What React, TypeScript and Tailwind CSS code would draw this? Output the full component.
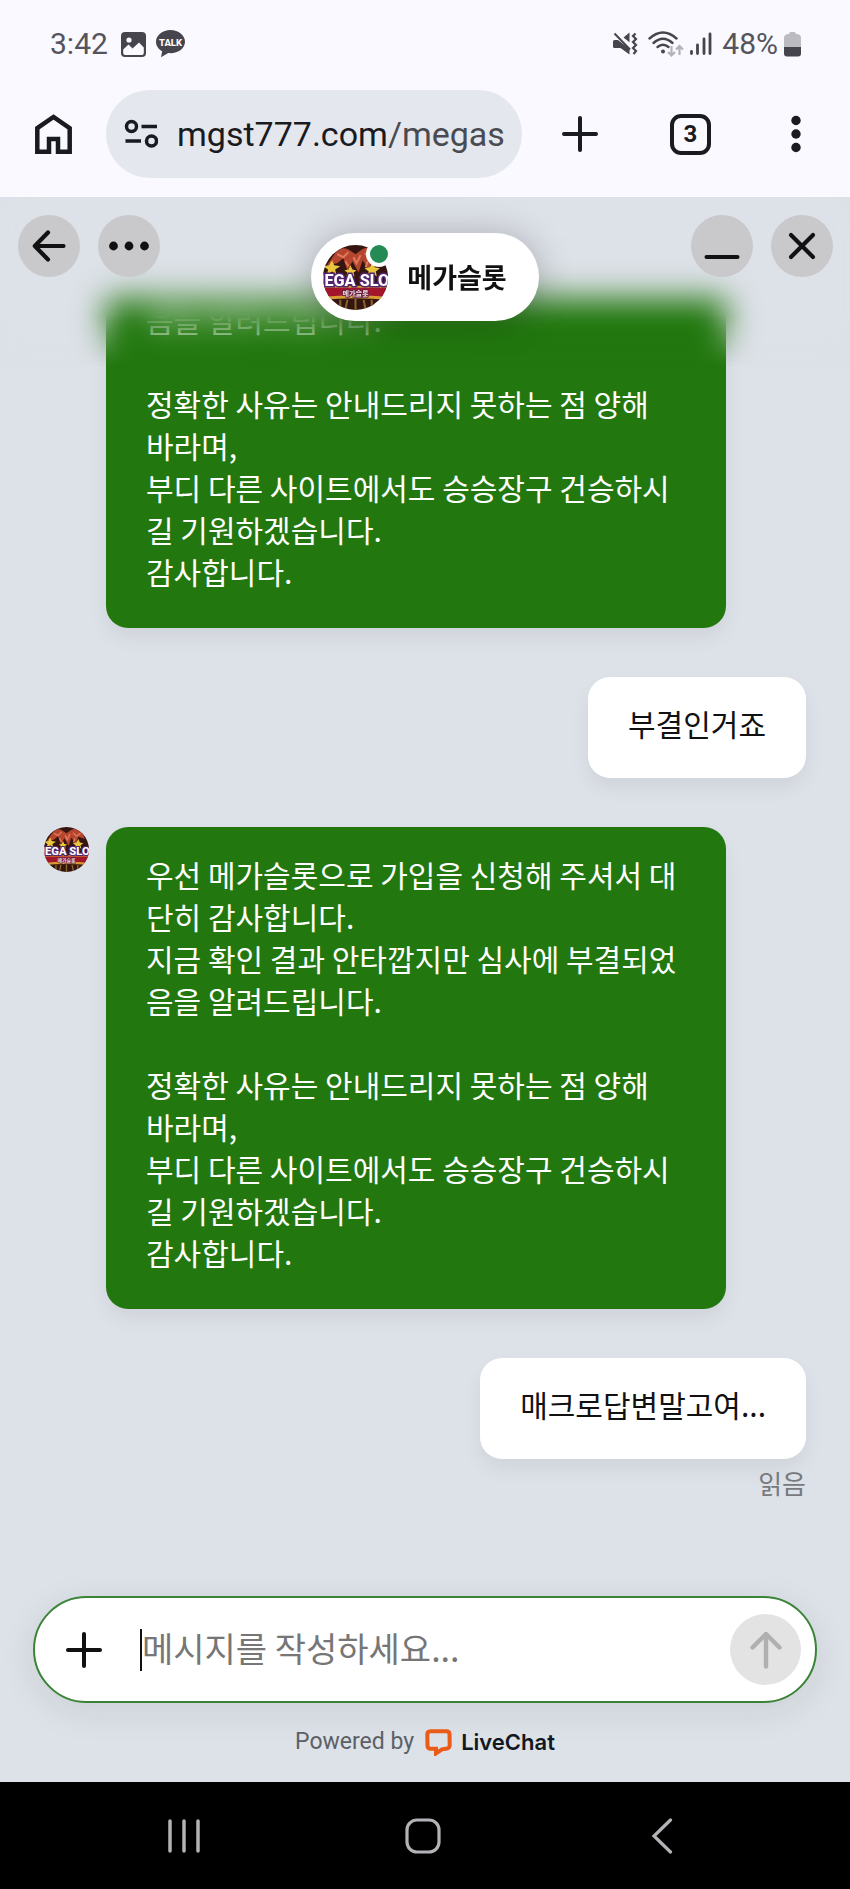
import { useState } from "react";

const firstReply = [
  "음을 알려드립니다.",
  "",
  "정확한 사유는 안내드리지 못하는 점 양해",
  "바라며,",
  "부디 다른 사이트에서도 승승장구 건승하시",
  "길 기원하겠습니다.",
  "감사합니다.",
];

const secondReply = [
  "우선 메가슬롯으로 가입을 신청해 주셔서 대",
  "단히 감사합니다.",
  "지금 확인 결과 안타깝지만 심사에 부결되었",
  ...firstReply,
];

function StatusBar() {
  return (
    <div className="flex h-[88px] items-center pl-[50px] pr-[49px] text-[30px] leading-none text-[#55545c]">
      <span>3:42</span>
      <svg className="ml-[13px]" width="25" height="25" viewBox="0 0 25 25">
        <rect width="25" height="25" rx="4" fill="#46454d" />
        <circle cx="8" cy="8" r="2.6" fill="#f9f9ff" />
        <path
          d="M2.2 17.5 7.5 12.5l4 4L18 10.5l4.8 5V21q0 2-2 2H4.2q-2 0-2-2z"
          fill="#f9f9ff"
        />
      </svg>
      <svg className="ml-[10px]" width="29" height="28" viewBox="0 0 29 28">
        <path
          d="M14.5 0C6.5 0 0 5.2 0 11.7c0 4.1 2.5 7.5 6.2 9.6L5 27.2l7.2-4.1c.8.1 1.5.1 2.3.1 8 0 14.5-5.1 14.5-11.5S22.5 0 14.5 0z"
          fill="#46454d"
        />
        <text
          x="14.5"
          y="15.5"
          textAnchor="middle"
          fontSize="9.5"
          fontWeight="800"
          fill="#fff"
        >
          TALK
        </text>
      </svg>
      <div className="ml-auto flex items-center">
        <svg width="25" height="24" viewBox="0 0 25 24" fill="#46454d">
          <path d="M0 9.5Q0 8 1.5 8H5l11.5 9v5.500L7.500 16H1.500Q0 16 0 14.500z" />
          <path d="M10.500 5.500 16.500.5v9.800z" />
          <path d="M1.500 1.500 17 17.500" stroke="#46454d" strokeWidth="2" />
          <path
            d="M22.500 1.500 20 4l3 3-3 3 3 3-3 3 3 3-2.500 3"
            fill="none"
            stroke="#46454d"
            strokeWidth="2.2"
          />
        </svg>
        <svg className="ml-[10px]" width="36" height="27" viewBox="0 0 36 27" fill="none">
          <g stroke="#46454d" strokeWidth="2.4" strokeLinecap="round">
            <path d="M1.500 7.500Q15-4.500 28.500 7.500" />
            <path d="M5.500 12Q15 3.500 24.500 12" />
            <path d="M9.500 16Q15 11.500 20.500 16" />
          </g>
          <circle cx="15" cy="20.5" r="2" fill="#46454d" />
          <path
            d="M23.500 15v9M20 21l3.500 3.500L27 21M31.500 24v-9M28 18.500 31.500 15l3.500 3.500"
            stroke="#b3b2b9"
            strokeWidth="2.2"
          />
        </svg>
        <svg
          className="ml-[6px]"
          width="22"
          height="24"
          viewBox="0 0 22 24"
          stroke="#46454d"
          strokeWidth="2.8"
          strokeLinecap="round"
        >
          <path d="M1.500 19.500v2M7.500 13v8.500M14 7v14.500M20 2v19.500" />
        </svg>
        <span className="ml-[10px]">48%</span>
        <svg className="ml-[6px]" width="17" height="25" viewBox="0 0 17 25">
          <path
            d="M5 2q0-2 2-2h3q2 0 2 2 5 0 5 4v10H0V6q0-4 5-4z"
            fill="#bcbbc1"
          />
          <path d="M0 15h17v6.500q0 3-3 3H3q-3 0-3-3z" fill="#46454d" />
        </svg>
      </div>
    </div>
  );
}

function BrowserBar() {
  return (
    <div className="flex h-[109px] items-start pl-[35px] pr-[49px] pt-[2px] text-[#1a1b20]">
      <div className="flex h-[88px] flex-1 items-center">
        <button type="button" aria-label="홈" className="shrink-0">
          <svg width="37" height="40" viewBox="0 0 37 40" fill="none">
            <path
              d="M2.300 14.200 18.500 2.900 34.700 14.200v23.500H23V25h-9v12.700H2.300z"
              stroke="currentColor"
              strokeWidth="4.5"
            />
          </svg>
        </button>
        <div className="ml-[34px] flex h-[88px] min-w-0 flex-1 items-center rounded-full bg-[#e4e7ee] pl-[18px]">
          <svg
            className="shrink-0"
            width="34"
            height="30"
            viewBox="0 0 34 30"
            fill="none"
            stroke="currentColor"
            strokeWidth="3.5"
          >
            <circle cx="7.5" cy="7.5" r="5" />
            <path d="M17.500 7.500H33M1.500 22H17" />
            <circle cx="27.5" cy="22" r="5" />
          </svg>
          <span className="ml-[19px] overflow-hidden whitespace-nowrap text-[34px]">
            mgst777.com<span className="text-[#4a4b51]">/megas</span>
          </span>
        </div>
        <button type="button" aria-label="새 탭" className="ml-[40px] shrink-0">
          <svg width="36" height="36" viewBox="0 0 36 36">
            <path
              d="M18 2v32M2 18h32"
              stroke="currentColor"
              strokeWidth="4"
              strokeLinecap="round"
            />
          </svg>
        </button>
        <button
          type="button"
          className="ml-[72px] flex size-[41px] shrink-0 items-center justify-center rounded-[11px] border-4 border-current text-[24px] font-bold leading-none"
        >
          3
        </button>
        <button type="button" aria-label="메뉴" className="ml-[80px] shrink-0">
          <svg width="10" height="38" viewBox="0 0 10 38" fill="currentColor">
            <circle cx="5" cy="5.5" r="4.7" />
            <circle cx="5" cy="19" r="4.7" />
            <circle cx="5" cy="32.5" r="4.7" />
          </svg>
        </button>
      </div>
    </div>
  );
}

function Avatar({ className }: { className: string }) {
  return (
    <svg className={className} viewBox="0 0 64 64" role="img" aria-label="MEGA SLOT">
      <defs>
        <clipPath id="avatar-clip">
          <circle cx="32" cy="32" r="32" />
        </clipPath>
      </defs>
      <g clipPath="url(#avatar-clip)">
        <rect width="64" height="64" fill="#35150f" />
        <path
          d="M12 8q7-8 14-3l6 4 7-5q9-4 16 5l3 8-9-3-4 10-6-9-4 12-6-11-5 9-4-12-6 5-10 2z"
          fill="#b5452f"
        />
        <path
          d="M14 9l6 3 5-5M30 12l3 6 4-8M41 8l5 5 6-4M22 16l3 5M44 16l-2 6"
          fill="none"
          stroke="#e07a58"
          strokeWidth="2"
        />
        <path
          d="M9 15l2 5 6 1-5 3 1 5-4-3-5 3 1-5-5-3 6-1zM27 20l2 4 4 1-3 2 1 4-4-2-4 2 1-4-3-2 4-1zM49 17l2 5 5 1-4 3 1 5-4-3-5 3 1-5-4-3 5-1z"
          fill="#e9c63d"
        />
        <rect y="41" width="64" height="11" fill="#a3152a" />
        <path d="M0 40h64v2H0zM0 51q32-3 64 0v3q-32-3-64 0z" fill="#d99c32" />
        <path
          d="M8 55v9M17 54v10M24 54l-2 10M32 53v11M40 54l2 10M48 54v10M56 55v9"
          stroke="#85652a"
          strokeWidth="2"
        />
        <text
          x="31"
          y="40"
          textAnchor="middle"
          fontFamily="Roboto, sans-serif"
          fontSize="16"
          fontWeight="800"
          fill="#fff"
          stroke="#55246f"
          strokeWidth="3"
          paintOrder="stroke"
        >
          MEGA SLOT
        </text>
        <text
          x="32"
          y="50"
          textAnchor="middle"
          fontSize="7"
          fontWeight="700"
          fill="#f3d9cf"
          stroke="#5b1e50"
          strokeWidth="1.5"
          paintOrder="stroke"
        >
          메가슬롯
        </text>
      </g>
    </svg>
  );
}

const roundButton =
  "flex size-[62px] items-center justify-center rounded-full bg-[#c9c9cb] text-[#111]";

function ChatHeader() {
  return (
    <header className="absolute inset-x-0 top-0">
      <div className="absolute inset-x-0 top-0 h-[180px] backdrop-blur-[16px] [mask-image:linear-gradient(black_118px,transparent_170px)]" />
      <div className="relative flex justify-between pl-[18px] pr-[17px] pt-[18px]">
        <div className="flex gap-[18px]">
          <button type="button" aria-label="뒤로" className={roundButton}>
            <svg width="34" height="32" viewBox="0 0 34 32" fill="none">
              <path
                d="M31.500 16H3M16 2.500 2.800 16 16 29.500"
                stroke="currentColor"
                strokeWidth="4.2"
                strokeLinecap="round"
                strokeLinejoin="round"
              />
            </svg>
          </button>
          <button type="button" aria-label="더보기" className={roundButton}>
            <svg width="40" height="10" viewBox="0 0 40 10" fill="currentColor">
              <circle cx="4.5" cy="5" r="4.4" />
              <circle cx="20" cy="5" r="4.4" />
              <circle cx="35.5" cy="5" r="4.4" />
            </svg>
          </button>
        </div>
        <div className="flex gap-[18px]">
          <button type="button" aria-label="최소화" className={roundButton}>
            <svg width="36" height="26" viewBox="0 0 36 26">
              <path d="M2.500 24H33.500" stroke="currentColor" strokeWidth="4" strokeLinecap="round" />
            </svg>
          </button>
          <button type="button" aria-label="닫기" className={roundButton}>
            <svg width="28" height="28" viewBox="0 0 28 28">
              <path
                d="M3 3l22 22M25 3 3 25"
                stroke="currentColor"
                strokeWidth="4.2"
                strokeLinecap="round"
              />
            </svg>
          </button>
        </div>
      </div>
      <div className="absolute inset-x-0 top-[36px] mx-auto flex h-[88px] w-fit items-center gap-[19px] rounded-full bg-white pl-[12px] pr-[32px] shadow-[0_2px_36px_rgba(0,0,0,0.24)]">
        <div className="relative">
          <Avatar className="size-[65px]" />
          <span className="absolute -right-1 -top-1 size-[26px] rounded-full border-4 border-white bg-[#238b53]" />
        </div>
        <h1 className="text-[27px] font-bold leading-[42px] text-[#111]">메가슬롯</h1>
      </div>
    </header>
  );
}

function Lines({ lines }: { lines: string[] }) {
  return (
    <>
      {lines.map((line, i) => (
        <p key={i} className="min-h-[42px]">
          {line}
        </p>
      ))}
    </>
  );
}

const bubbleShadow = "shadow-[0_10px_20px_rgba(0,20,0,0.06)]";

export default function App() {
  const [message, setMessage] = useState("");

  return (
    <div className="flex min-h-screen flex-col bg-[#f9f9ff] font-[Roboto,'Noto_Sans_CJK_KR',sans-serif]">
      <StatusBar />
      <BrowserBar />
      <main className="relative flex flex-1 flex-col bg-[#dde1e8] font-['Noto_Sans_CJK_KR',sans-serif]">
        <section className="flex flex-col gap-[49px] px-[44px] pt-[101px] text-[30px] leading-[42px]">
          <div
            className={`ml-[62px] mr-[80px] rounded-b-[22px] bg-[#22780f] px-10 pb-[36px] text-white ${bubbleShadow}`}
          >
            <Lines lines={firstReply} />
          </div>
          <div
            className={`self-end rounded-[22px] bg-white px-10 pb-[34px] pt-[25px] text-[#111] ${bubbleShadow}`}
          >
            부결인거죠
          </div>
          <div className="mr-[80px] flex items-start gap-[17px]">
            <Avatar className="size-[45px] shrink-0" />
            <div
              className={`flex-1 rounded-[22px] bg-[#22780f] px-10 pb-[36px] pt-[26px] text-white ${bubbleShadow}`}
            >
              <Lines lines={secondReply} />
            </div>
          </div>
          <div className="flex flex-col items-end">
            <div
              className={`rounded-[22px] bg-white px-10 pb-[34px] pt-[25px] text-[#111] ${bubbleShadow}`}
            >
              매크로답변말고여...
            </div>
            <span className="mt-[6px] text-[26px] leading-[36px] text-[#77797d]">읽음</span>
          </div>
        </section>
        <ChatHeader />

        <form
          className="mx-[33px] mt-auto flex h-[107px] items-center rounded-full border-2 border-[#3a8436] bg-white pl-[31px] pr-[14px] shadow-[0_8px_36px_rgba(0,60,20,0.09)]"
          onSubmit={(e) => e.preventDefault()}
        >
          <button type="button" aria-label="첨부" className="shrink-0 text-[#111]">
            <svg width="36" height="36" viewBox="0 0 36 36">
              <path
                d="M18 2v32M2 18h32"
                stroke="currentColor"
                strokeWidth="4"
                strokeLinecap="round"
              />
            </svg>
          </button>
          <span className="ml-[38px] h-[42px] w-[2px] shrink-0 bg-[#111]" />
          <input
            aria-label="메시지"
            className="min-w-0 flex-1 pb-[3px] text-[34px] leading-[48px] text-[#111] caret-transparent outline-none placeholder:text-[#767676]"
            placeholder="메시지를 작성하세요..."
            value={message}
            onChange={(e) => setMessage(e.target.value)}
          />
          <button
            type="submit"
            aria-label="보내기"
            className="flex size-[71px] shrink-0 items-center justify-center rounded-full bg-[#e3e3e3] text-[#b0b0b0]"
          >
            <svg width="32" height="38" viewBox="0 0 32 38" fill="none">
              <path
                d="M16 35.500V3M2.500 16.500 16 3l13.500 13.500"
                stroke="currentColor"
                strokeWidth="4.4"
                strokeLinecap="round"
                strokeLinejoin="round"
              />
            </svg>
          </button>
        </form>

        <footer className="flex h-[79px] items-center justify-center font-[Roboto,sans-serif] text-[23px] text-[#5b6066]">
          <span>Powered by</span>
          <a href="#livechat" className="ml-[11px] flex items-center font-[Inter,sans-serif] text-[22px] font-semibold text-[#111820]">
            <svg className="mr-[9px]" width="27" height="27" viewBox="0 0 27 27" fill="none">
              <path
                d="M5.500 2.300h16q2.800 0 3 2.800l.2 11q0 2.800-2.700 3.400l-5 .9-6 4v-4.600H5.300q-2.700-.3-2.800-3l-.2-11.500q.2-2.800 3.200-3z"
                stroke="#ea5b17"
                strokeWidth="4"
              />
            </svg>
            LiveChat
          </a>
        </footer>
      </main>

      <nav className="grid h-[107px] grid-cols-3 place-items-center bg-black pl-[65px] pr-[69px] text-[#b4b2b7]">
        <button type="button" aria-label="최근 앱">
          <svg width="32" height="34" viewBox="0 0 32 34" stroke="currentColor" strokeWidth="3.5" strokeLinecap="round">
            <path d="M2 2v30M16 2v30M30 2v30" />
          </svg>
        </button>
        <button type="button" aria-label="홈 화면">
          <svg width="36" height="36" viewBox="0 0 36 36" fill="none">
            <rect x="2" y="2" width="32" height="32" rx="10" stroke="currentColor" strokeWidth="3.2" />
          </svg>
        </button>
        <button type="button" aria-label="뒤로 가기">
          <svg width="22" height="36" viewBox="0 0 22 36" fill="none">
            <path d="M19.500 2 3 18l16.500 16" stroke="currentColor" strokeWidth="3.2" strokeLinecap="round" />
          </svg>
        </button>
      </nav>
    </div>
  );
}
